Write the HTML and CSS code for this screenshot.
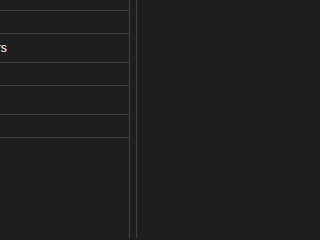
FILE: index.html
```html
<!DOCTYPE html>
<html>
<head>
<meta charset="utf-8">
<link rel="stylesheet" href="styles.css">
</head>
<body>
<div class="layout">
  <div class="list">
    <div class="row row-top"></div>
    <div class="row row-short"></div>
    <div class="row row-tall"><span class="label">Orders</span></div>
    <div class="row row-short"></div>
    <div class="row row-tall"></div>
    <div class="row row-short"></div>
  </div>
  <div class="gutter"></div>
  <div class="detail"></div>
</div>
</body>
</html>
```
FILE: styles.css
```css
html, body {
  margin: 0;
  padding: 0;
  background: #1f1f1f;
  height: 100%;
  overflow: hidden;
}
.layout {
  display: flex;
  height: 238px;
  font-family: "Liberation Sans", Arial, sans-serif;
  color: #ffffff;
}
.list {
  width: 129px;
  border-right: 1px solid #424242;
  display: flex;
  flex-direction: column;
  overflow: hidden;
}
.row {
  border-bottom: 1px solid #3e3e3e;
  display: flex;
  align-items: center;
  flex: none;
  overflow: hidden;
}
.row-top { height: 10px; }
.row-short { height: 22px; }
.row-tall { height: 28px; }
.label {
  font-size: 12px;
  line-height: 14px;
  white-space: nowrap;
  margin-left: -30px;
}
.gutter {
  width: 6px;
  border-right: 1px solid #424242;
}
.detail {
  flex: 1;
}
```
